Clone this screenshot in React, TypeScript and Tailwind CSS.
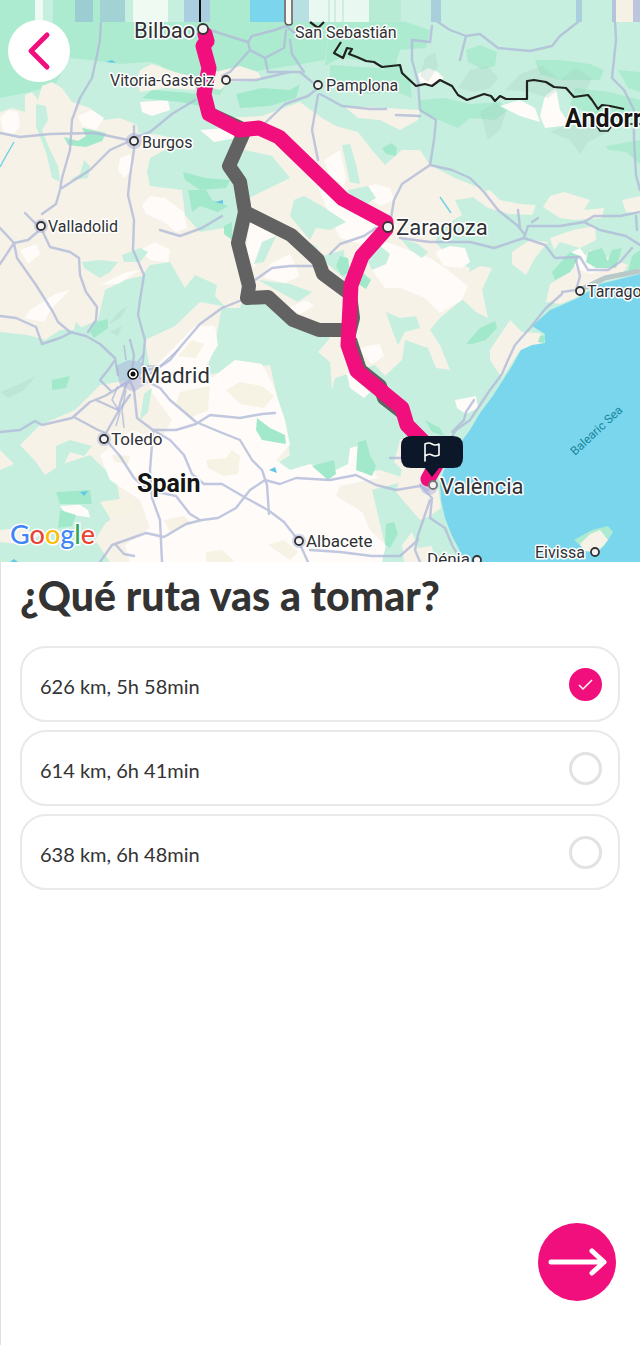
import React, { useState } from "react";

const routes = [
  { id: "r1", distance: "626 km", duration: "5h 58min" },
  { id: "r2", distance: "614 km", duration: "6h 41min" },
  { id: "r3", distance: "638 km", duration: "6h 48min" },
];

const SEA =
  "M640 274L620 279 600 284 580 297 562 305 550 310 540 319 532 326 545 334 545 343 532 345 521 350 512 366 503 380 492 397 480 413 470 430 461 442 453 457 444 470 440 482 441 500 445 518 452 536 458 547 464 562 640 562Z";

const GREEN = [
  "M0 20H330L325 60 290 66 262 70 230 78 220 95 200 92 175 80 160 65 150 62 120 64 90 60 70 58 55 85 30 92 0 98Z",
  "M330 20H400L430 30 426 48 400 50 396 62 410 80 412 98 396 92 380 62 340 58 325 66Z",
  "M330 65L380 68 402 84 400 92 360 94 330 84Z",
  "M466 50L480 45 497 52 495 66 482 69 468 62Z",
  "M535 60L560 60 590 64 604 70 600 80 560 80 540 74Z",
  "M575 88L610 92 640 100 640 120 600 118 570 105Z",
  "M618 70L640 72 640 92 628 88Z",
  "M420 100L445 98 470 104 500 102 508 110 495 120 470 118 458 128 448 124 420 112Z",
  "M606 146L640 140 640 164 626 152 608 150Z",
];

const DARK_GREEN = [
  "M180 92L205 95 200 106 180 102 160 100 142 98 152 90Z",
  "M64 137L78 141 86 136 82 128 92 130 106 133 102 141 86 147 68 145Z",
  "M236 94L262 88 290 90 300 84 296 98 270 106 240 108Z",
  "M188 190L206 190 212 200 228 206 218 212 200 206 192 212 190 200Z",
  "M183 172L205 178 230 180 226 188 200 190 185 180Z",
  "M224 226L232 222 232 240 224 234Z",
  "M382 148L392 143 397 148 396 156 386 154Z",
  "M96 322L108 319 108 328 94 338 90 332Z",
  "M340 256L348 258 350 272 342 276 336 266Z",
  "M360 270L371 280 366 289 358 284Z",
  "M552 272L570 252 580 256 570 272 555 280Z",
  "M588 252L602 248 606 256 610 268 596 268 586 262Z",
  "M612 250L622 248 616 268 606 266Z",
  "M632 256L640 250 640 268 628 272Z",
  "M466 344L480 328 495 321 497 328 486 340 472 344Z",
  "M425 420L440 428 444 436 432 432Z",
  "M257 418L270 428 285 435 286 444 262 440 256 430Z",
  "M56 492L90 490 92 504 60 504Z",
  "M60 510L76 515 72 526 58 528Z",
  "M358 442L366 440 370 455 376 466 372 476 356 470Z",
  "M386 524L394 522 398 534 390 548 385 545Z",
  "M312 466L334 460 336 474 328 480Z",
  "M52 380L70 376 66 388 52 390Z",
  "M540 336L546 335 544 343 538 342Z",
];

const CREAM = [
  "M0 112L12 108 25 112 25 95 32 92 38 100 42 86 52 82 62 88 72 102 90 108 104 120 120 118 137 125 138 133 160 135 186 142 165 150 150 158 147 172 150 186 182 190 185 215 200 232 224 228 238 242 246 290 240 308 226 308 215 296 217 285 195 275 185 288 170 262 150 265 142 276 125 280 105 290 98 320 75 330 60 330 45 340 28 335 0 332Z",
  "M225 118L262 116 300 102 322 118 336 126 358 132 372 150 385 165 402 150 420 150 430 165 455 178 485 190 470 198 455 200 462 215 440 228 435 242 455 262 470 268 462 300 440 318 430 330 440 345 450 370 436 368 428 348 405 340 402 360 385 376 375 365 360 370 335 378 332 390 330 362 318 352 330 338 290 312 265 292 250 290 240 240 245 200 290 178 272 156 236 148Z",
  "M20 445L40 425 75 410 100 385 130 380 150 370 145 340 175 326 200 302 222 306 215 345 205 375 270 365 278 400 285 425 290 455 275 465 320 480 380 470 410 480 372 490 385 545 370 562 110 562 95 540 120 500 116 480 90 455 60 465 45 475 36 462Z",
  "M400 440L412 432 424 470 438 486 441 508 430 516 420 520 396 492 402 470 394 462Z",
  "M402 545L412 532 418 548 432 546 434 562 404 562Z",
  "M140 70L152 64 175 72 198 78 195 90 165 88 140 92 137 80Z",
  "M215 72L240 66 258 72 262 80 230 82 220 90 205 86Z",
  "M345 107L370 107 420 110 418 120 400 130 380 120 358 118Z",
  "M470 195L490 190 500 200 520 204 536 205 532 215 510 214 488 208Z",
  "M543 207L550 196 564 192 590 200 584 210 604 208 602 218 575 220 560 218Z",
  "M573 230L595 226 596 240 580 248 560 242 554 250 550 238Z",
  "M512 252L530 240 548 242 535 258 526 275 512 264Z",
  "M464 275L480 266 492 268 482 290 488 318 476 312 463 300Z",
  "M550 284L570 272 590 250 605 256 628 265 620 278 600 282 575 298 560 304 546 302Z",
  "M490 350L510 320 522 332 540 333 544 343 520 350 502 378 490 360Z",
  "M0 450L14 464 0 470Z",
  "M0 530L20 528 40 535 26 545 0 542Z",
  "M622 200L640 196 640 214 626 212Z",
];

const PALE = [
  "M0 118L8 110 18 112 20 126 14 134 4 132Z",
  "M78 116L92 110 104 118 96 130 82 126Z",
  "M120 158L130 154 134 168 124 178 118 170Z",
  "M140 102L168 100 170 110 152 116 142 112Z",
  "M142 205L150 196 165 198 184 212 187 228 176 232 164 222 146 214Z",
  "M20 250L36 244 40 254 28 264Z",
  "M100 285L126 272 140 270 118 284Z",
  "M30 310L55 294 70 290 52 308 44 322 24 318Z",
  "M140 250L155 242 170 250 168 262 150 260Z",
  "M200 130L226 128 236 138 214 142Z",
  "M250 222L276 236 262 256 254 268 246 250Z",
  "M270 264L290 254 300 276 285 283 264 278Z",
  "M310 168L334 190 352 206 380 216 398 226 384 240 360 244 340 238 330 216Z",
  "M380 240L398 246 430 258 448 270 468 286 462 300 440 313 425 298 400 288 385 288 372 270Z",
  "M358 190L375 184 390 188 394 200 380 206Z",
  "M435 252L450 246 465 248 470 262 462 268 444 266Z",
  "M358 350L366 346 380 344 384 356 372 364Z",
  "M346 370L356 380 370 392 364 398 350 388Z",
  "M288 308L306 300 314 306 300 314Z",
  "M150 372L195 326 215 326 218 345 206 365 212 378 235 360 262 364 273 385 285 420 290 445 276 460 290 470 310 464 332 472 348 464 350 448 358 446 378 478 340 486 336 496 362 512 370 530 386 545 382 562 130 562 125 545 150 528 140 500 110 480 100 455 132 430 160 440 172 420 150 390Z",
  "M60 506L90 504 94 518 66 514Z",
  "M65 488L76 482 90 492 72 494Z",
  "M418 74L428 68 438 72 444 78 430 86 420 82Z",
  "M500 106L520 100 535 108 540 122 520 116Z",
  "M545 96L556 88 560 110 570 125 545 128 540 116Z",
  "M324 160L340 150 346 178 344 186 330 176Z",
  "M568 254L580 248 590 262 606 270 590 274 576 268Z",
  "M455 400L476 396 478 408 466 414 457 408Z",
];

// light green bits that sit on top of the plains
const PATCHES = [
  "M36 104L46 106 48 120 42 130 50 150 58 166 60 182 52 178 46 152 36 126Z",
  "M122 255L140 248 148 252 140 262 124 262Z",
  "M82 262L100 260 118 262 110 272 100 278 84 268Z",
  "M84 160L90 166 88 178 70 180 80 174Z",
  "M262 242L276 236 264 262 254 264Z",
  "M342 145L350 144 356 164 360 184 350 182 346 164Z",
  "M348 190L368 186 376 198 360 208 344 200Z",
  "M352 118L366 124 384 126 395 134 376 136 360 130Z",
  "M386 312L400 318 416 316 420 328 405 332 398 345 392 330Z",
  "M400 238L418 244 428 252 422 258 410 250Z",
  "M378 244L390 254 386 264 372 270 366 258Z",
  "M258 280L290 284 312 292 298 302 276 290Z",
  "M56 446L70 440 92 446 84 456 70 452 62 468 100 482 104 490 110 520 94 530 88 510 56 490Z",
  "M294 200L304 196 322 206 346 222 330 230 316 228 310 240 290 216Z",
  "M300 240L316 246 322 256 344 250 346 280 330 266Z",
  "M76 322L84 330 96 330 90 342 72 336Z",
  "M144 394L152 388 148 412 140 420Z",
];

const ROADS = [
  "M0 133L20 137 50 134 95 133 128 140 150 132 172 114 195 100",
  "M101 20L100 40 96 60 92 78 80 98 72 120 70 150 62 178 60 190 56 204 42 214",
  "M134 126L134 150 130 176 128 195 134 220 133 250 144 275 140 300 138 315 145 340 142 370",
  "M62 188L90 170 110 150 132 140",
  "M25 213L42 230 50 247 70 252 79 258 80 275 86 292 97 307 96 320 88 332",
  "M0 228L14 243 28 240 42 228",
  "M0 264L14 243 17 258 36 285 53 312 58 322 70 332 86 336 100 344 115 358 118 375",
  "M0 316L16 318 36 327 42 344 60 338 72 332",
  "M148 375L170 360 182 345 200 324 222 308 242 300",
  "M255 280L272 268 290 266 316 266",
  "M160 230L180 236 202 228 222 216",
  "M0 432L20 430 35 421 42 425 72 418 90 402 105 396 118 388 130 380",
  "M96 400L118 410 126 385 132 378 M74 417L98 430 106 433 M106 433L118 412 130 395",
  "M130 380L134 390 137 418 153 430 176 430 196 424 210 415 240 418 262 414 275 413",
  "M140 378L160 388 170 400 196 422 220 432 240 440 252 460 262 470 267 485 269 514",
  "M153 430L170 440 184 455 192 474 204 484 222 484 246 498 268 510 284 522 298 540 308 562",
  "M153 432L150 470 152 498 160 520 162 562",
  "M106 440L120 456 134 478 148 490 176 496 190 514 200 520",
  "M100 562L112 545 146 533 164 537 186 524 202 520 218 518 236 508 250 490 265 480 280 484 296 478 330 480 356 475 376 485 396 490 420 486 428 490",
  "M116 545L124 554 134 556",
  "M310 550L340 552 372 556 400 556 418 540",
  "M115 360L108 370 100 380 112 392 M130 340L134 355 132 372 M140 372L155 368 150 380",
  "M210 30L235 38 248 42 252 36 275 30 286 26 296 34 305 28",
  "M248 42L250 50 230 72 222 76 M250 50L265 58 284 48 286 30 M265 58L268 72 300 72 312 82 M290 40L292 54 304 72",
  "M226 80L256 80 290 72",
  "M264 124L285 104 308 96 318 88",
  "M318 95L312 130 318 160",
  "M435 20L450 30 466 36 480 34 498 48 530 51 552 46 560 36 578 22",
  "M412 40L412 60 418 82 420 110 436 120 434 140 430 165 402 184 394 200 390 224",
  "M412 40L430 42 432 26 M466 36L460 60",
  "M320 94L342 106 370 109 386 109 M396 115L420 116",
  "M430 165L452 170 470 178 484 192 498 210 518 226 525 235",
  "M615 20L616 40 612 78 624 90 634 110 634 140 636 175 640 190",
  "M640 212L620 216 594 216 584 222 560 226 528 226 524 238 494 248 470 242 430 242 400 238",
  "M584 222L600 230 626 236 640 245 M518 210L520 228 M532 222L538 218 M636 216L637 230",
  "M524 238L545 245 555 258 580 257 588 270 608 270 620 262 632 248",
  "M576 260L580 276 576 290 562 292",
  "M330 254L340 244 364 236 376 228",
  "M562 294L546 308 530 328 515 345 508 360 502 374 490 390 480 405 470 420 456 430 450 440 452 458",
  "M474 400L466 412 464 420 452 432",
  "M420 485L432 498 430 518 445 528 452 545 462 562 M430 500L418 535 415 550 420 562",
  "M390 458L410 458",
];

const GREY_ROUTES = [
  "M208 113L245 130 229 166 240 182 245 212 291 235 318 260 323 274 350 294 353 318 349 334",
  "M245 212L238 243 249 286 247 298 268 297 293 320 319 330 349 330",
  "M350 340L360 370 380 386 384 398 402 412",
];
const PINK_ROUTE =
  "M205 34L207 41 203 46 209 68 204 94 209 114 239 130 259 128 279 137 343 199 386 222 386 229 362 256 351 285 348 345 357 371 402 408 407 425 440 458 428 479";
const BORDER =
  "M310 22L318 28 324 22 M341 42L334 53 343 58 347 48 352 49 349 54 357 57 366 61 374 62 382 67 400 65 402 73 416 86 425 84 432 86 440 80 452 86 458 95 467 100 484 94 491 96 495 101 500 96 506 99 527 99 527 81 534 80 546 82 554 87 566 88 574 97 588 95 592 100 598 109 602 105 610 106 624 109";

const CITIES = [
  { name: "Bilbao", x: 134, y: 38, size: 22, dot: [203, 29] },
  { name: "San Sebastián", x: 295, y: 38, size: 16 },
  { name: "Vitoria-Gasteiz", x: 110, y: 86, size: 16, dot: [226, 80] },
  { name: "Pamplona", x: 326, y: 91, size: 16, dot: [318, 85] },
  { name: "Burgos", x: 142, y: 148, size: 16, dot: [134, 141] },
  { name: "Valladolid", x: 48, y: 232, size: 16, dot: [41, 226] },
  { name: "Zaragoza", x: 396, y: 235, size: 22, dot: [388, 227] },
  { name: "Tarragona", x: 587, y: 297, size: 16, dot: [580, 291] },
  { name: "Madrid", x: 141, y: 383, size: 22, dot: [133, 374] },
  { name: "Toledo", x: 111, y: 445, size: 17, dot: [104, 439] },
  { name: "Albacete", x: 306, y: 547, size: 17, dot: [299, 541] },
  { name: "València", x: 440, y: 494, size: 22, dot: [433, 485] },
  { name: "Dénia", x: 427, y: 565, size: 17, dot: [477, 560] },
  { name: "Eivissa", x: 535, y: 558, size: 16, dot: [595, 552] },
];

// [x, width, colour] of the bands along the top edge
const BANDS: [number, number, string][] = [
  [0, 35, "#adebd0"],
  [35, 8, "#eefaf4"],
  [43, 10, "#c6efdf"],
  [53, 22, "#adebd0"],
  [75, 18, "#9ccdd2"],
  [93, 7, "#adebd0"],
  [100, 25, "#a2d2d4"],
  [125, 8, "#c6efdf"],
  [133, 35, "#eefaf2"],
  [168, 16, "#c6efdf"],
  [184, 26, "#abcfe0"],
  [210, 40, "#adebd0"],
  [250, 34, "#7ad5ed"],
  [284, 9, "#f6f8f4"],
  [293, 16, "#b7dfe4"],
  [309, 60, "#e9f8f1"],
  [369, 32, "#b7ebd4"],
  [401, 30, "#c6efdf"],
  [431, 10, "#a9cfdc"],
  [441, 135, "#c6efdf"],
  [576, 6, "#a9cfdc"],
  [582, 30, "#c6efdf"],
  [612, 4, "#b5c4dc"],
  [616, 17, "#f5f1e5"],
  [633, 7, "#bcc6dc"],
];

const Shapes = ({ paths, color }: { paths: string[]; color: string }) => (
  <g fill={color}>
    {paths.map((d) => (
      <path key={d} d={d} />
    ))}
  </g>
);

const RouteMap = () => (
  <svg
    viewBox="0 0 640 562"
    className="block w-full h-auto"
    role="img"
    aria-label="Mapa de la ruta"
  >
    <rect width="640" height="562" fill="#c6efdf" />
    <Shapes paths={GREEN} color="#adebd0" />
    <Shapes paths={CREAM} color="#f6f2e7" />
    <Shapes paths={PALE} color="#fefbf9" />
    <Shapes paths={PATCHES} color="#c6efdf" />
    <Shapes paths={DARK_GREEN} color="#a2e9cb" />
    <g fill="#9fc9bb" opacity=".22">
      <path d="M425 58L435 52 438 66 428 82 420 76ZM458 88L470 70 488 66 498 78 490 88 474 92ZM505 90L520 74 542 66 560 80 576 68 592 78 584 94 560 88 548 98 530 92Z" />
      <path d="M480 112L496 102 506 112 500 130 488 140ZM550 132L565 125 600 122 608 132 588 142 580 154 570 140ZM108 325L118 312 128 306 120 318ZM110 332L122 326 118 336ZM0 392L20 384 36 376 24 390 8 398Z" />
    </g>
    <g fill="#f6f2e4">
      <path d="M206 460L226 458 232 450 240 456 238 474 224 476 208 468ZM112 455L130 456 128 464 114 462ZM164 520L184 516 192 524 170 532ZM206 552L222 550 235 562 206 562ZM268 545L284 540 298 552 290 560ZM100 502L125 498 140 505 132 515 110 518ZM226 390L240 382 262 386 274 396 264 408 240 404Z" />
      <path d="M180 392L210 386 208 410 190 418 176 404ZM178 356L192 340 204 344 196 358Z" />
    </g>
    <path d={SEA} fill="#7ad6ed" />
    <path
      d="M574 540L592 530 608 526 613 532 604 546 588 552Z"
      fill="#adebd0"
    />
    <path d="M580 544L590 534 600 530 608 540 598 552 584 551Z" fill="#f6f2e7" />
    <path
      d="M580 290L605 278 640 271"
      fill="none"
      stroke="#b9c8c8"
      strokeWidth="5"
    />
    <g fill="#65c7e8">
      <path d="M106 62L112 60 116 63ZM215 202L223 200 223 204ZM269 470L275 467 277 473ZM80 492L88 491 84 496ZM10 562L14 559 18 562Z" />
    </g>
    <path
      d="M14 142L6 156 0 167M440 197L451 213"
      fill="none"
      stroke="#74d2e7"
      strokeWidth="1.5"
    />
    <g
      fill="none"
      stroke="#b2bbd9"
      strokeWidth="2.4"
      strokeLinejoin="round"
      strokeLinecap="round"
      opacity=".8"
    >
      {ROADS.map((d) => (
        <path key={d} d={d} />
      ))}
    </g>
    <g fill="#a9b2dc" opacity=".5">
      <path d="M116 366L128 360 140 362 150 370 146 384 134 392 120 386Z" />
      <circle cx="104" cy="439" r="7" />
      <circle cx="134" cy="141" r="8" />
      <circle cx="41" cy="226" r="7" />
      <circle cx="299" cy="541" r="7" />
      <circle cx="429" cy="486" r="9" />
    </g>
    <g fill="none" stroke="#a9b2dc" strokeWidth="1.6" opacity=".7">
      <path d="M118 386L112 400 120 412 116 426M126 390L122 410 124 428M146 366L160 366 178 350M138 362L144 354M126 360L124 345" />
    </g>

    {BANDS.map(([x, w, color]) => (
      <rect key={x} x={x} y="0" width={w} height="22" fill={color} />
    ))}
    <path d="M200 0V22" stroke="#111" strokeWidth="2" />
    <path
      d="M285 0V21Q285 25 289 25T292 21V0"
      fill="#f6f8f4"
      stroke="#555"
      strokeWidth="1.5"
    />
    <path d="M303 0V22M329 0V22M335 0V22M343 0V22" stroke="#b5e4d2" />

    <path
      d={BORDER}
      fill="none"
      stroke="#20221f"
      strokeWidth="2.2"
      strokeLinejoin="round"
    />
    <path
      d="M596 125L600 131 608 131 611 127M628 124L640 124"
      fill="none"
      stroke="#20221f"
      strokeWidth="1.5"
    />

    <g fill="none" strokeWidth="14" strokeLinejoin="round">
      {GREY_ROUTES.map((d) => (
        <path key={d} d={d} stroke="#626262" />
      ))}
      <path
        d={PINK_ROUTE}
        stroke="#f10f7d"
        strokeWidth="15"
        strokeLinecap="round"
      />
    </g>

    <g
      fontFamily='Roboto, "Liberation Sans", sans-serif'
      stroke="#fff"
      strokeWidth="3"
      strokeLinejoin="round"
      paintOrder="stroke"
      fill="#303134"
    >
      {CITIES.map(({ name, x, y, size }) => (
        <text key={name} x={x} y={y} fontSize={size}>
          {name}
        </text>
      ))}
      <text x="137" y="492" fontSize="25" fontWeight="700" fill="#151515">
        Spain
      </text>
      <text x="565" y="127" fontSize="25" fontWeight="700" fill="#151515">
        Andorra
      </text>
    </g>
    <text
      transform="translate(575 456) rotate(-43)"
      fontFamily="Roboto, sans-serif"
      fontSize="12"
      fill="#17879d"
    >
      Balearic Sea
    </text>

    {CITIES.map(
      ({ name, dot }) =>
        dot && (
          <circle
            key={name}
            cx={dot[0]}
            cy={dot[1]}
            r={name === "Bilbao" || name === "Zaragoza" ? 5 : 4}
            fill="#f5f2f3"
            stroke={name === "València" ? "#777" : "#333"}
            strokeWidth="1.8"
          />
        ),
    )}
    <circle cx="133" cy="374" r="5" fill="#fff" stroke="#111" strokeWidth="1.5" />
    <circle cx="133" cy="374" r="2.5" fill="#111" />

    <path
      d="M411 436H453Q463 436 463 446V458Q463 468 453 468H439L432 477 425 468H411Q401 468 401 458V446Q401 436 411 436Z"
      fill="#0c1729"
    />
    <path
      d="M425 461V444Q429 442 432 444T439 444V455Q435 457 432 455T425 456"
      fill="none"
      stroke="#fff"
      strokeWidth="1.6"
      strokeLinecap="round"
      strokeLinejoin="round"
    />

    <text
      x="10"
      y="544"
      fontFamily='Lato, "Liberation Sans", sans-serif'
      fontSize="27"
      fontWeight="500"
      stroke="#fff"
      strokeWidth="3"
      paintOrder="stroke"
    >
      <tspan fill="#4285f4">G</tspan>
      <tspan fill="#ea4335">o</tspan>
      <tspan fill="#fbbc05">o</tspan>
      <tspan fill="#4285f4">g</tspan>
      <tspan fill="#34a853">l</tspan>
      <tspan fill="#ea4335">e</tspan>
    </text>
  </svg>
);

const App = () => {
  const [selected, setSelected] = useState(routes[0].id);

  return (
    <main className="flex min-h-screen flex-col border-l border-[#e0e0e0] bg-white font-[Lato,'Open_Sans',sans-serif] text-[#333]">
      <div className="relative -ml-px">
        <RouteMap />
        <button
          type="button"
          aria-label="Volver"
          className="absolute left-2 top-5 flex size-[62px] items-center justify-center rounded-full bg-white"
        >
          <svg width="24" height="40" viewBox="0 0 24 40" fill="none">
            <path
              d="M20 4L4 20L20 36"
              stroke="#f10f7d"
              strokeWidth="5"
              strokeLinecap="round"
              strokeLinejoin="round"
            />
          </svg>
        </button>
      </div>

      <div className="flex grow flex-col pb-11 pl-[19px] pr-5">
        <h1 className="pt-3 text-[41px] font-black leading-[44px]">
          ¿Qué ruta vas a tomar?
        </h1>

        <div className="mt-7 flex flex-col gap-2">
          {routes.map((route) => (
            <label
              key={route.id}
              className="flex h-[76px] cursor-pointer items-center justify-between rounded-[26px] border-2 border-[#e9e9e9] pl-[18px] pr-4 text-[20px]"
            >
              <span className="pt-1">
                {route.distance}, {route.duration}
              </span>
              <span className="relative flex size-[33px]">
                <input
                  type="radio"
                  name="route"
                  value={route.id}
                  checked={selected === route.id}
                  onChange={() => setSelected(route.id)}
                  className="peer size-[33px] appearance-none rounded-full border-3 border-[#e2e2e2] checked:border-[#f10f7d] checked:bg-[#f10f7d]"
                />
                <svg
                  viewBox="0 0 33 33"
                  fill="none"
                  className="pointer-events-none absolute inset-0 hidden peer-checked:block"
                >
                  <path d="M10 17L14 21L23 12" stroke="#fff" strokeWidth="1.5" />
                </svg>
              </span>
            </label>
          ))}
        </div>

        <button
          type="button"
          aria-label="Continuar"
          className="mt-auto mr-1 flex size-[78px] items-center justify-center self-end rounded-full bg-[#f10f7d]"
        >
          <svg width="60" height="30" viewBox="0 0 60 30" fill="none">
            <path
              d="M4 15H57M45 4L57 15L45 26"
              stroke="#fff"
              strokeWidth="5"
              strokeLinecap="round"
              strokeLinejoin="round"
            />
          </svg>
        </button>
      </div>
    </main>
  );
};

export default App;
